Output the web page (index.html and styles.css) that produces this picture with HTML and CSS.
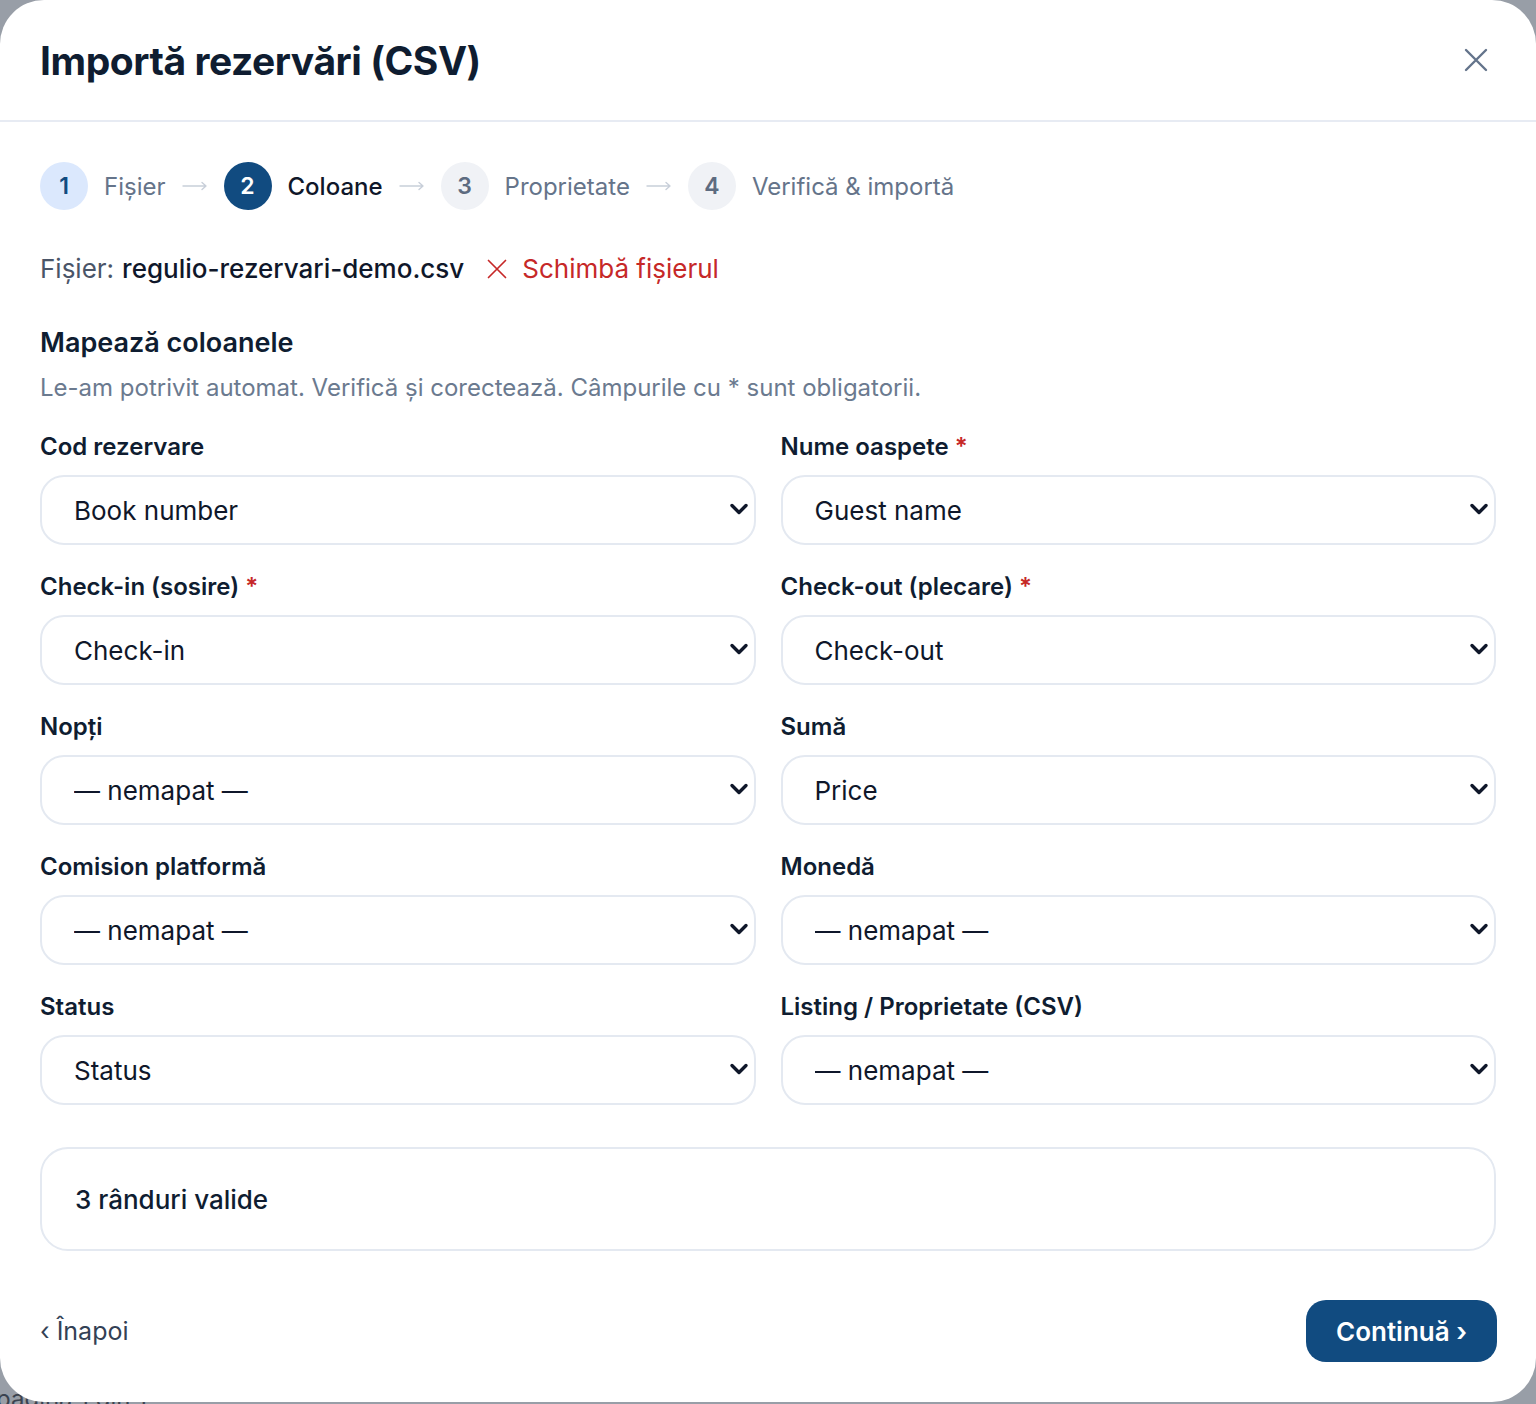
FILE: index.html
```html
<!DOCTYPE html>
<html lang="ro">
<head>
    <meta charset="UTF-8">
    <title>Importă rezervări (CSV)</title>
    <link rel="stylesheet" href="styles.css">
</head>
<body>

<div class="behind">pagina 1 din 1</div>

<div class="modal">
    <div class="modal-head">
        <h1>Importă rezervări (CSV)</h1>
        <button class="close" aria-label="Închide">
            <svg width="24" height="24" viewBox="0 0 24 24" fill="none" stroke="#64748b" stroke-width="2.4" stroke-linecap="round"><path d="M2 2l20 20M22 2L2 22"/></svg>
        </button>
    </div>

    <div class="modal-body">
        <div class="steps">
            <span class="num done">1</span><span class="step-label">Fișier</span>
            <svg class="arrow" width="26" height="12" viewBox="0 0 26 12" fill="none" stroke="#c8cfd9" stroke-width="1.4" stroke-linecap="round" stroke-linejoin="round"><path d="M1 6h23M20 2.5L24 6l-4 3.5"/></svg>
            <span class="num active">2</span><span class="step-label current">Coloane</span>
            <svg class="arrow" width="26" height="12" viewBox="0 0 26 12" fill="none" stroke="#c8cfd9" stroke-width="1.4" stroke-linecap="round" stroke-linejoin="round"><path d="M1 6h23M20 2.5L24 6l-4 3.5"/></svg>
            <span class="num">3</span><span class="step-label">Proprietate</span>
            <svg class="arrow" width="26" height="12" viewBox="0 0 26 12" fill="none" stroke="#c8cfd9" stroke-width="1.4" stroke-linecap="round" stroke-linejoin="round"><path d="M1 6h23M20 2.5L24 6l-4 3.5"/></svg>
            <span class="num">4</span><span class="step-label">Verifică &amp; importă</span>
        </div>

        <div class="file-line">
            <span class="muted">Fișier:</span> <span class="fname">regulio-rezervari-demo.csv</span>
            <a class="change" href="#">
                <svg width="20" height="20" viewBox="0 0 20 20" fill="none" stroke="#c62828" stroke-width="1.7" stroke-linecap="round"><path d="M1.5 1.5l17 17M18.5 1.5l-17 17"/></svg>
                Schimbă fișierul
            </a>
        </div>

        <h2>Mapează coloanele</h2>
        <p class="hint">Le-am potrivit automat. Verifică și corectează. Câmpurile cu * sunt obligatorii.</p>

        <div class="grid">
            <div class="field">
                <label>Cod rezervare</label>
                <div class="sel"><select><option>Book number</option></select><svg class="chev" width="20" height="20" viewBox="0 0 20 20" fill="none" stroke="#0f172a" stroke-width="3.4" stroke-linecap="round" stroke-linejoin="round"><path d="M3 6.5l7 7 7-7"/></svg></div>
            </div>
            <div class="field">
                <label>Nume oaspete <span class="req">*</span></label>
                <div class="sel"><select><option>Guest name</option></select><svg class="chev" width="20" height="20" viewBox="0 0 20 20" fill="none" stroke="#0f172a" stroke-width="3.4" stroke-linecap="round" stroke-linejoin="round"><path d="M3 6.5l7 7 7-7"/></svg></div>
            </div>
            <div class="field">
                <label>Check-in (sosire) <span class="req">*</span></label>
                <div class="sel"><select><option>Check-in</option></select><svg class="chev" width="20" height="20" viewBox="0 0 20 20" fill="none" stroke="#0f172a" stroke-width="3.4" stroke-linecap="round" stroke-linejoin="round"><path d="M3 6.5l7 7 7-7"/></svg></div>
            </div>
            <div class="field">
                <label>Check-out (plecare) <span class="req">*</span></label>
                <div class="sel"><select><option>Check-out</option></select><svg class="chev" width="20" height="20" viewBox="0 0 20 20" fill="none" stroke="#0f172a" stroke-width="3.4" stroke-linecap="round" stroke-linejoin="round"><path d="M3 6.5l7 7 7-7"/></svg></div>
            </div>
            <div class="field">
                <label>Nopți</label>
                <div class="sel"><select><option>— nemapat —</option></select><svg class="chev" width="20" height="20" viewBox="0 0 20 20" fill="none" stroke="#0f172a" stroke-width="3.4" stroke-linecap="round" stroke-linejoin="round"><path d="M3 6.5l7 7 7-7"/></svg></div>
            </div>
            <div class="field">
                <label>Sumă</label>
                <div class="sel"><select><option>Price</option></select><svg class="chev" width="20" height="20" viewBox="0 0 20 20" fill="none" stroke="#0f172a" stroke-width="3.4" stroke-linecap="round" stroke-linejoin="round"><path d="M3 6.5l7 7 7-7"/></svg></div>
            </div>
            <div class="field">
                <label>Comision platformă</label>
                <div class="sel"><select><option>— nemapat —</option></select><svg class="chev" width="20" height="20" viewBox="0 0 20 20" fill="none" stroke="#0f172a" stroke-width="3.4" stroke-linecap="round" stroke-linejoin="round"><path d="M3 6.5l7 7 7-7"/></svg></div>
            </div>
            <div class="field">
                <label>Monedă</label>
                <div class="sel"><select><option>— nemapat —</option></select><svg class="chev" width="20" height="20" viewBox="0 0 20 20" fill="none" stroke="#0f172a" stroke-width="3.4" stroke-linecap="round" stroke-linejoin="round"><path d="M3 6.5l7 7 7-7"/></svg></div>
            </div>
            <div class="field">
                <label>Status</label>
                <div class="sel"><select><option>Status</option></select><svg class="chev" width="20" height="20" viewBox="0 0 20 20" fill="none" stroke="#0f172a" stroke-width="3.4" stroke-linecap="round" stroke-linejoin="round"><path d="M3 6.5l7 7 7-7"/></svg></div>
            </div>
            <div class="field">
                <label>Listing / Proprietate (CSV)</label>
                <div class="sel"><select><option>— nemapat —</option></select><svg class="chev" width="20" height="20" viewBox="0 0 20 20" fill="none" stroke="#0f172a" stroke-width="3.4" stroke-linecap="round" stroke-linejoin="round"><path d="M3 6.5l7 7 7-7"/></svg></div>
            </div>
        </div>

        <div class="summary">3 rânduri valide</div>

        <div class="footer">
            <a class="back" href="#">‹ Înapoi</a>
            <button class="next">Continuă ›</button>
        </div>
    </div>
</div>

</body>
</html>
```

FILE: styles.css
```css
body { margin: 0; background: #989ea7; font-family: Inter, "Noto Sans", sans-serif; color: #0f172a; }
.behind { position: absolute; left: -4px; top: 1384px; font-size: 24px; color: #3b4350; }
.modal { position: relative; z-index: 1; background: #fff; border-radius: 44px; width: 1536px; height: 1402px; box-sizing: border-box; }

.modal-head { height: 120px; border-bottom: 2px solid #e7ebf3; display: flex; align-items: center; justify-content: space-between; padding: 0 40px; }
.modal-head h1 { margin: 0; font-size: 39px; font-weight: 700; letter-spacing: -0.45px; color: #0f1d31; }
.close { background: none; border: none; padding: 0; cursor: pointer; display: flex; margin-right: 8px; }

.modal-body { padding: 40px 40px 40px; }

.steps { display: flex; align-items: center; gap: 16px; height: 48px; }
.num { width: 48px; height: 48px; border-radius: 50%; background: #f0f2f6; color: #5d6b80; display: flex; align-items: center; justify-content: center; font-size: 23px; font-weight: 600; }
.num.done { background: #dbe8fd; color: #114b80; }
.num.active { background: #114b80; color: #fff; }
.step-label { font-size: 24px; color: #65748a; }
.step-label.current { color: #0f172a; font-weight: 500; }
.arrow { flex: none; }

.file-line { margin-top: 41px; font-size: 26px; line-height: 36px; display: flex; align-items: center; }
.muted { color: #4a5568; margin-right: 8px; }
.fname { color: #0f172a; font-weight: 500; }
.change { color: #c62828; text-decoration: none; display: flex; align-items: center; gap: 15px; margin-left: 23px; }

h2 { margin: 38px 0 0; font-size: 27px; line-height: 36px; font-weight: 600; color: #0f1d31; }
.hint { margin: 11px 0 0; font-size: 24px; line-height: 32px; color: #6b7a8f; }

.grid { margin-top: 28px; display: grid; grid-template-columns: 1fr 1fr; column-gap: 25px; row-gap: 27px; }
.field label { display: block; font-size: 24px; line-height: 30px; font-weight: 600; color: #0f1d31; margin-bottom: 13px; }
.req { color: #c62828; }
.sel { position: relative; }
.sel select { appearance: none; -webkit-appearance: none; width: 100%; height: 70px; box-sizing: border-box; border: 2px solid #e4e9f1; border-radius: 24px; background: #fff; padding: 0 32px; font-family: inherit; font-size: 26px; color: #0f172a; }
.chev { position: absolute; right: 7px; top: 24px; pointer-events: none; }

.summary { margin-top: 42px; height: 104px; box-sizing: border-box; border: 2px solid #e4e9f1; border-radius: 28px; padding: 0 33px; display: flex; align-items: center; font-size: 26px; font-weight: 500; color: #0f1d31; }

.footer { margin-top: 49px; display: flex; justify-content: space-between; align-items: center; }
.back { color: #334155; text-decoration: none; font-size: 25px; }
.next { background: #114b80; color: #fff; border: none; border-radius: 20px; height: 62px; padding: 0 30px; font-family: inherit; font-size: 26px; font-weight: 600; cursor: pointer; margin-right: -1px; }
```
